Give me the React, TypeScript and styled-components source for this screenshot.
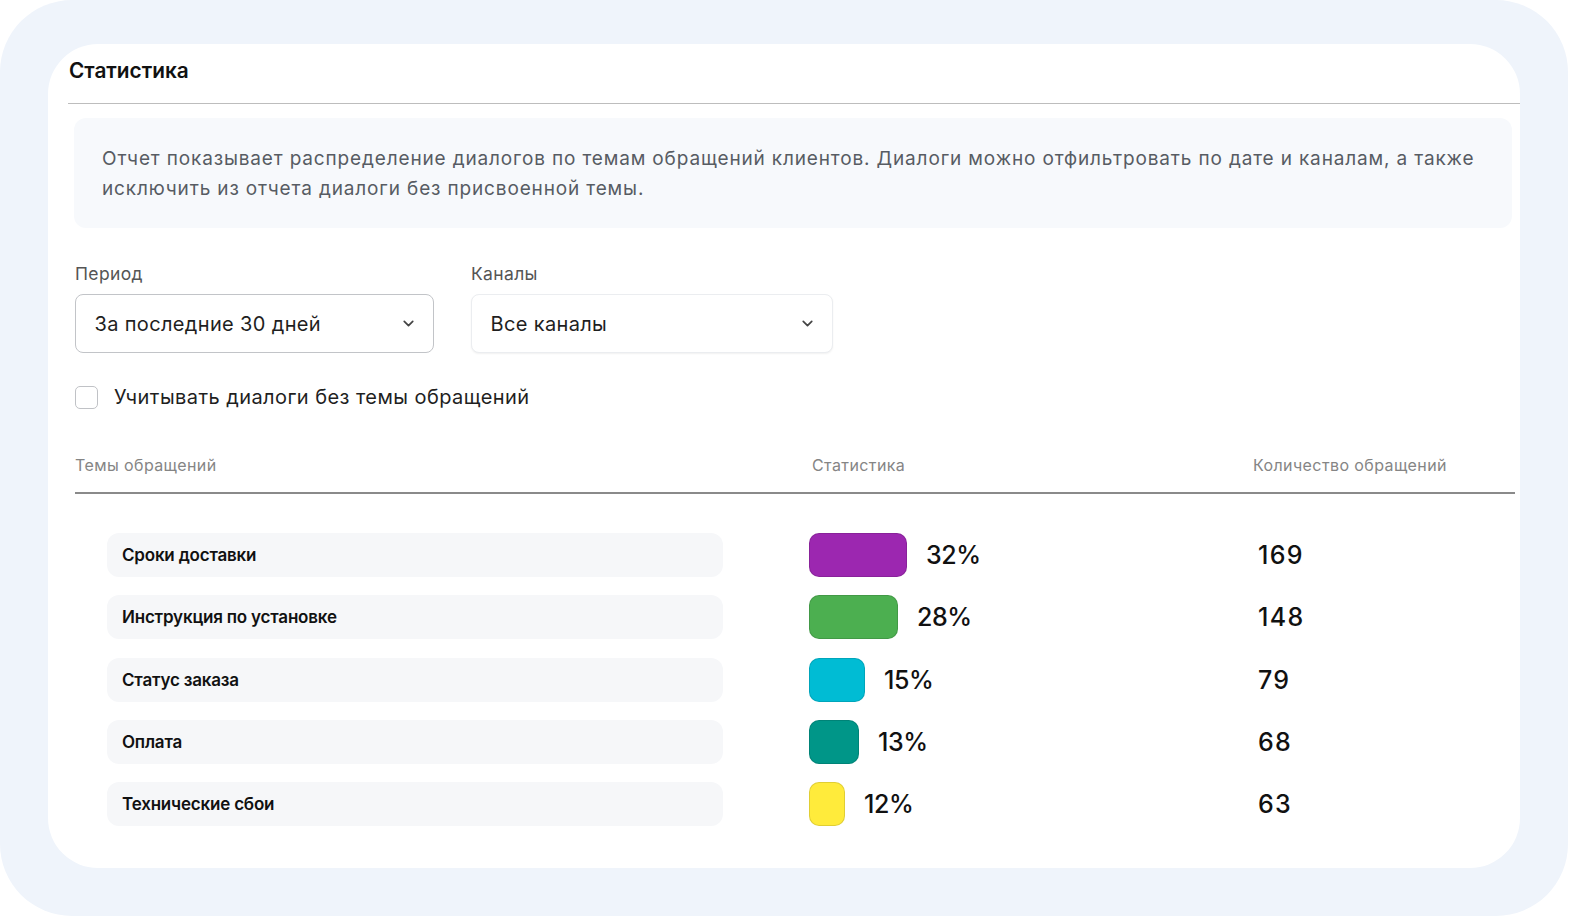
import React, { useState } from 'react'
import styled, { createGlobalStyle } from 'styled-components'
import { ChevronDown } from 'lucide-react'

const GlobalStyle = createGlobalStyle`
    html, body {
        margin: 0;
        padding: 0;
        background: #ffffff;
    }
    body {
        font-family: Inter, "Noto Sans", "Liberation Sans", sans-serif;
        color: #1c1c1e;
    }
`

type Topic = {
    name: string
    percent: number
    count: number
    color: string
    barWidth: number
}

const topics: Topic[] = [
    { name: 'Сроки доставки', percent: 32, count: 169, color: '#9c27b0', barWidth: 98 },
    { name: 'Инструкция по установке', percent: 28, count: 148, color: '#4caf50', barWidth: 89 },
    { name: 'Статус заказа', percent: 15, count: 79, color: '#00bcd4', barWidth: 56 },
    { name: 'Оплата', percent: 13, count: 68, color: '#009688', barWidth: 50 },
    { name: 'Технические сбои', percent: 12, count: 63, color: '#ffeb3b', barWidth: 36 },
]

const Frame = styled.div`
    width: 1568px;
    height: 916px;
    box-sizing: border-box;
    padding: 44px 48px 48px 48px;
    background: #eff4fb;
    border-radius: 72px;
`

const Card = styled.section`
    height: 100%;
    box-sizing: border-box;
    background: #ffffff;
    border-radius: 50px;
    display: flex;
    flex-direction: column;
    overflow: hidden;
`

const Header = styled.header`
    height: 60px;
    flex-shrink: 0;
    box-sizing: border-box;
    margin-left: 20px;
    padding: 14px 0 0 1px;
    border-bottom: 1.5px solid #bdbdbd;
`

const Title = styled.h1`
    margin: 0;
    font-size: 20.8px;
    font-weight: 600;
    line-height: 26px;
    color: #111;
`

const Content = styled.div`
    padding: 14px 8px 0 26px;
    display: flex;
    flex-direction: column;
`

const Info = styled.div`
    background: #f7f9fc;
    border-radius: 12px;
    padding: 26px 20px 24px 28px;
    font-size: 19px;
    line-height: 30px;
    letter-spacing: 0.85px;
    color: #575c63;
`

const Filters = styled.div`
    display: flex;
    gap: 37px;
    margin-top: 35px;
    padding-left: 1px;
`

const Field = styled.div<{ $width: number }>`
    width: ${({ $width }) => $width}px;
    display: flex;
    flex-direction: column;
    gap: 9px;
`

const Label = styled.label`
    font-size: 17.5px;
    line-height: 22px;
    color: #555;
    letter-spacing: 0.35px;
`

const Select = styled.div<{ $outlined?: boolean }>`
    height: 59px;
    box-sizing: border-box;
    display: flex;
    align-items: center;
    justify-content: space-between;
    padding: 0 16px 0 18.5px;
    border-radius: 8px;
    border: 1px solid ${({ $outlined }) => ($outlined ? '#c2c4c8' : '#ebedf0')};
    box-shadow: ${({ $outlined }) => ($outlined ? 'none' : '0 1px 2px rgba(0,0,0,0.06)')};
    font-size: 20px;
    color: #1f1f1f;
    letter-spacing: 0.35px;
    background: #fff;
    cursor: pointer;
`

const CheckRow = styled.label`
    display: flex;
    align-items: center;
    gap: 16px;
    margin-top: 32px;
    padding-left: 1px;
    height: 24px;
    font-size: 20px;
    color: #1f1f1f;
    letter-spacing: 0.43px;
    cursor: pointer;
`

const Box = styled.span<{ $checked: boolean }>`
    width: 23px;
    height: 23px;
    box-sizing: border-box;
    border-radius: 5px;
    border: 1.5px solid #c0c2c6;
    background: ${({ $checked }) => ($checked ? '#9c27b0' : '#fff')};
`

const Table = styled.div`
    margin-top: 46px;
    padding-left: 1px;
    margin-right: -3px;
`

const Grid = styled.div`
    display: grid;
    grid-template-columns: 734px 444px 1fr;
    align-items: center;
`

const HeadRow = styled(Grid)`
    padding-bottom: 17px;
    border-bottom: 2px solid #8a8a8a;
`

const HeadCell = styled.div<{ $indent?: number }>`
    padding-left: ${({ $indent }) => $indent ?? 0}px;
    font-size: 16px;
    line-height: 20px;
    color: #858585;
    letter-spacing: 0.4px;
`

const Body = styled.div`
    display: flex;
    flex-direction: column;
    gap: 18.3px;
    padding-top: 39px;
`

const Pill = styled.div`
    margin-left: 32px;
    width: 616px;
    height: 44px;
    box-sizing: border-box;
    padding: 0 15px;
    display: flex;
    align-items: center;
    background: #f6f7f9;
    border-radius: 12px;
    font-size: 17px;
    font-weight: 600;
    letter-spacing: -0.2px;
    color: #111;
`

const Stat = styled.div`
    display: flex;
    align-items: center;
    gap: 19px;
`

const Bar = styled.div<{ $color: string }>`
    height: 44px;
    box-sizing: border-box;
    border-radius: 10px;
    background: ${({ $color }) => $color};
    border: 1px solid rgba(0, 0, 0, 0.12);
`

const Percent = styled.div`
    font-size: 25px;
    font-weight: 500;
    color: #111;
    letter-spacing: -0.4px;
`

const Count = styled.div`
    padding-left: 5px;
    font-size: 25px;
    font-weight: 500;
    color: #111;
    letter-spacing: 1.3px;
`

export default function App() {
    const [withoutTopic, setWithoutTopic] = useState(false)

    return (
        <>
            <GlobalStyle />
            <Frame>
                <Card>
                    <Header>
                        <Title>Статистика</Title>
                    </Header>
                    <Content>
                        <Info>
                            Отчет показывает распределение диалогов по темам обращений клиентов. Диалоги можно отфильтровать по дате и каналам, а также
                            исключить из отчета диалоги без присвоенной темы.
                        </Info>

                        <Filters>
                            <Field $width={359}>
                                <Label>Период</Label>
                                <Select $outlined>
                                    За последние 30 дней
                                    <ChevronDown size={17} strokeWidth={2.4} color="#444" />
                                </Select>
                            </Field>
                            <Field $width={362}>
                                <Label>Каналы</Label>
                                <Select>
                                    Все каналы
                                    <ChevronDown size={17} strokeWidth={2.4} color="#444" />
                                </Select>
                            </Field>
                        </Filters>

                        <CheckRow onClick={() => setWithoutTopic(!withoutTopic)}>
                            <Box $checked={withoutTopic} />
                            Учитывать диалоги без темы обращений
                        </CheckRow>

                        <Table>
                            <HeadRow>
                                <HeadCell>Темы обращений</HeadCell>
                                <HeadCell $indent={3}>Статистика</HeadCell>
                                <HeadCell>Количество обращений</HeadCell>
                            </HeadRow>
                            <Body>
                                {topics.map((t) => (
                                    <Grid key={t.name}>
                                        <Pill>{t.name}</Pill>
                                        <Stat>
                                            <Bar $color={t.color} style={{ width: t.barWidth }} />
                                            <Percent>{t.percent}%</Percent>
                                        </Stat>
                                        <Count>{t.count}</Count>
                                    </Grid>
                                ))}
                            </Body>
                        </Table>
                    </Content>
                </Card>
            </Frame>
        </>
    )
}
